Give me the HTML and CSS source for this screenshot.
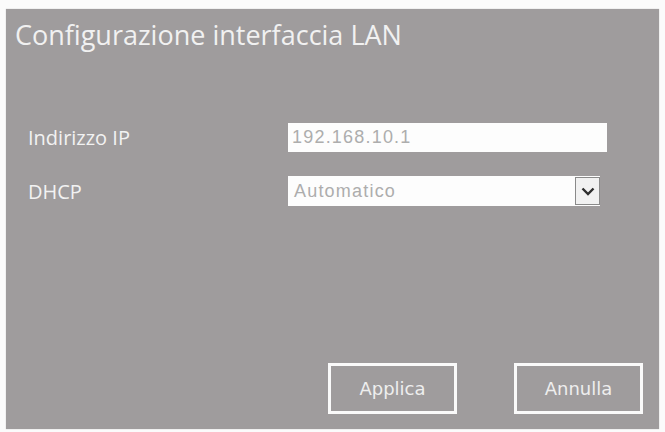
FILE: index.html
```html
<!DOCTYPE html>
<html>
<head>
  <link rel="stylesheet" href="styles.css">
</head>
<body>
  <div class="dialog">
    <div class="dialog-title">Configurazione interfaccia LAN</div>

    <div class="form">
      <div class="form-row">
        <span class="form-label">Indirizzo IP</span>
        <div class="text-field">192.168.10.1</div>
      </div>
      <div class="form-row">
        <span class="form-label">DHCP</span>
        <div class="select-field">
          <span class="select-value">Automatico</span>
          <span class="select-arrow">
            <svg width="14" height="9" viewBox="0 0 14 9">
              <path d="M1.5 1.5 L7 7 L12.5 1.5" fill="none" stroke="#2e2e2e" stroke-width="2.4"/>
            </svg>
          </span>
        </div>
      </div>
    </div>

    <div class="actions">
      <button class="dialog-btn">Applica</button>
      <button class="dialog-btn">Annulla</button>
    </div>
  </div>
</body>
</html>
```

FILE: styles.css
```css
body {
  margin: 0;
  background: #fbfbfb;
  font-family: 'Open Sans', 'Liberation Sans', sans-serif;
}

.dialog {
  margin: 9px 6px 3px 6px;
  height: 420px;
  box-sizing: border-box;
  background: #9f9c9d;
  box-shadow: 0 0 1px rgba(0, 0, 0, 0.25);
  padding: 9px 0 0 9px;
  display: flex;
  flex-direction: column;
}

.dialog-title {
  font-size: 27px;
  color: #f1f1f1;
  line-height: 34px;
}

.form {
  margin-top: 71px;
  padding-left: 13px;
  display: flex;
  flex-direction: column;
  gap: 24px;
}

.form-row {
  display: flex;
  align-items: center;
}

.form-label {
  width: 260px;
  font-size: 20px;
  color: #f2f2f2;
}

.text-field {
  width: 319px;
  height: 29px;
  box-sizing: border-box;
  background: #fdfdfd;
  padding: 3px 4px;
  font-family: 'Liberation Sans', Arial, sans-serif;
  font-size: 18px;
  color: #adadad;
  letter-spacing: 1.2px;
  line-height: 23px;
}

.select-field {
  width: 312px;
  height: 30px;
  display: flex;
  align-items: center;
  background: #fdfdfd;
  font-family: 'Liberation Sans', Arial, sans-serif;
  font-size: 18px;
  color: #adadad;
  letter-spacing: 1.2px;
}

.select-value {
  flex: 1;
  padding-left: 6px;
}

.select-arrow {
  width: 23px;
  height: 26px;
  border: 1px solid #8a8a8a;
  background: #f1f1f1;
  display: flex;
  align-items: center;
  justify-content: center;
}

.actions {
  margin-top: auto;
  margin-bottom: 15px;
  display: flex;
  justify-content: flex-end;
  gap: 57px;
  padding-right: 16px;
}

.dialog-btn {
  width: 129px;
  height: 51px;
  background: transparent;
  border: 3px solid #fafafa;
  color: #eeeeee;
  font-family: 'DejaVu Sans', 'Liberation Sans', sans-serif;
  font-size: 18px;
}
```
